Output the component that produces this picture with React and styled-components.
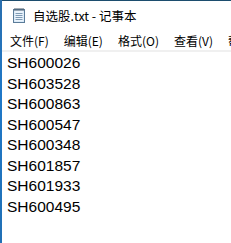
import React from 'react'
import styled, { createGlobalStyle } from 'styled-components';

const Global = createGlobalStyle`
  html, body {
    margin: 0;
    padding: 0;
    background: #ffffff;
    overflow: hidden;
  }
`

const codes = ['SH600026', 'SH603528', 'SH600863', 'SH600547', 'SH600348', 'SH601857', 'SH601933', 'SH600495'];
const menus = ['文件(F)', '编辑(E)', '格式(O)', '查看(V)', '帮助(H)'];

const NoteIcon = () => (
  <svg width="14" height="16" viewBox="0 0 14 16">
    <rect x="1.5" y="2.5" width="11" height="13" fill="#cfe3f5" stroke="#5b7c99" />
    <rect x="2.5" y="3.5" width="9" height="11" fill="#eaf3fb" />
    <line x1="3.5" y1="6.5" x2="10.5" y2="6.5" stroke="#7f9bb5" />
    <line x1="3.5" y1="8.5" x2="10.5" y2="8.5" stroke="#7f9bb5" />
    <line x1="3.5" y1="10.5" x2="10.5" y2="10.5" stroke="#7f9bb5" />
    <line x1="3.5" y1="12.5" x2="10.5" y2="12.5" stroke="#7f9bb5" />
    <path d="M3 1v3M5 1v3M7 1v3M9 1v3M11 1v3" stroke="#4a5a6a" strokeWidth="1" />
  </svg>
);

const App = () => {
  return (
    <Screen>
      <Global />
      <Desktop />
      <Window>
        <TitleBar>
          <NoteIcon />
          <Title>自选股.txt - 记事本</Title>
        </TitleBar>
        <MenuBar>
          {menus.map(m => <MenuItem key={m}>{m}</MenuItem>)}
        </MenuBar>
        <Editor>
          {codes.map(c => <Line key={c}>{c}</Line>)}
        </Editor>
      </Window>
    </Screen>
  );
}

export default App;

const Screen = styled.div`
  display: flex;
  width: 231px;
  height: 243px;
  overflow: hidden;
`

const Desktop = styled.div`
  width: 2px;
  flex-shrink: 0;
  background: linear-gradient(to bottom, #2a6fae 0%, #1f78c8 40%, #2170b5 100%);
`

const Window = styled.div`
  flex: 1;
  display: flex;
  flex-direction: column;
  border-top: 1px solid #1c4d6e;
  background: #fff;
  min-width: 0;
`

const TitleBar = styled.div`
  height: 28px;
  padding-bottom: 2px;
  display: flex;
  align-items: center;
  padding-left: 10px;
  gap: 7px;
  flex-shrink: 0;
`

const Title = styled.span`
  font-family: "Noto Sans CJK SC", "Liberation Sans", sans-serif;
  font-size: 12.5px;
  color: #000;
  white-space: nowrap;
`

const MenuBar = styled.div`
  height: 19px;
  display: flex;
  align-items: center;
  padding-left: 1px;
  border-bottom: 2px solid #f0f0f0;
  white-space: nowrap;
  flex-shrink: 0;
`

const MenuItem = styled.span`
  font-family: "Noto Sans CJK SC", "Liberation Sans", sans-serif;
  font-size: 12px;
  color: #000;
  padding: 0 7px 0 7px;
  margin-right: 1px;
`

const Editor = styled.div`
  flex: 1;
  padding: 1px 0 0 5px;
`

const Line = styled.div`
  font-family: "Liberation Sans", Arial, sans-serif;
  font-size: 15.5px;
  line-height: 20.5px;
  color: #000;
`
